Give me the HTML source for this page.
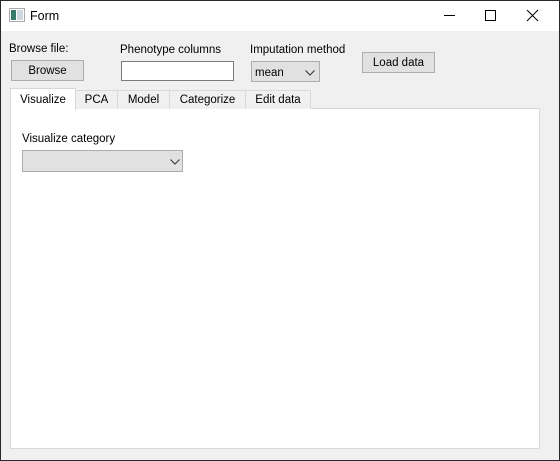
<!DOCTYPE html><html><head><style>
*{margin:0;padding:0;box-sizing:border-box}
body{width:560px;height:461px;position:relative;background:#f0f0f0;font-family:"Liberation Sans",sans-serif;font-size:11.5px;color:#000;overflow:hidden}
.a{position:absolute}
.btn{background:#e1e1e1;border:1px solid #adadad;text-align:center}
.tab{position:absolute;top:90px;height:19px;border:1px solid #d9d9d9;border-bottom:none;background:#f0f0f0;text-align:center;line-height:19px}
</style></head><body>
<div class="a" style="left:0;top:0;width:560px;height:31px;background:#fff"></div>
<svg class="a" style="left:9px;top:8px" width="16" height="14"><rect x="0.5" y="0.5" width="15" height="13" fill="#fff" stroke="#aaa"/><rect x="2" y="2" width="5" height="10" fill="#3a7a6a"/><rect x="8" y="2" width="6" height="10" fill="#cfd8e0"/></svg>
<div class="a" style="left:30px;top:9px;font-size:12.5px">Form</div>
<svg class="a" style="left:440px;top:8px" width="110" height="16" fill="none" stroke="#000" stroke-width="1"><line x1="4" y1="7.5" x2="15" y2="7.5"/><rect x="45.5" y="2.5" width="10" height="10"/><path d="M87 2L98 13M98 2L87 13"/></svg>
<div class="a" style="left:9px;top:43px">Browse file:</div>
<div class="a btn" style="left:11px;top:60px;width:73px;height:21px;line-height:20px">Browse</div>
<div class="a" style="left:120px;top:44px">Phenotype columns</div>
<div class="a" style="left:121px;top:61px;width:113px;height:20px;background:#fff;border:1px solid #7a7a7a"></div>
<div class="a" style="left:250px;top:44px">Imputation method</div>
<div class="a btn" style="left:251px;top:61px;width:69px;height:21px;text-align:left;padding-left:3px;line-height:22px">mean<svg class="a" style="left:53px;top:8px" width="10" height="6"><path d="M0.5 0.5L5 5L9.5 0.5" fill="none" stroke="#333"/></svg></div>
<div class="a btn" style="left:362px;top:52px;width:73px;height:21px;line-height:21px">Load data</div>
<div class="a" style="left:10px;top:108px;width:530px;height:341px;background:#fff;border:1px solid #d9d9d9"></div>
<div class="tab" style="left:75px;width:43px">PCA</div>
<div class="tab" style="left:117px;width:53px">Model</div>
<div class="tab" style="left:169px;width:77px">Categorize</div>
<div class="tab" style="left:245px;width:66px">Edit data</div>
<div class="tab" style="left:10px;top:88px;width:66px;height:22px;background:#fff;line-height:22px">Visualize</div>
<div class="a" style="left:22px;top:133px">Visualize category</div>
<div class="a btn" style="left:22px;top:150px;width:161px;height:22px"><svg class="a" style="left:147px;top:8px" width="10" height="6"><path d="M0.5 0.5L5 5L9.5 0.5" fill="none" stroke="#333"/></svg></div>
<div class="a" style="left:0;top:0;width:560px;height:461px;border:1px solid #262a2e"></div>
</body></html>
